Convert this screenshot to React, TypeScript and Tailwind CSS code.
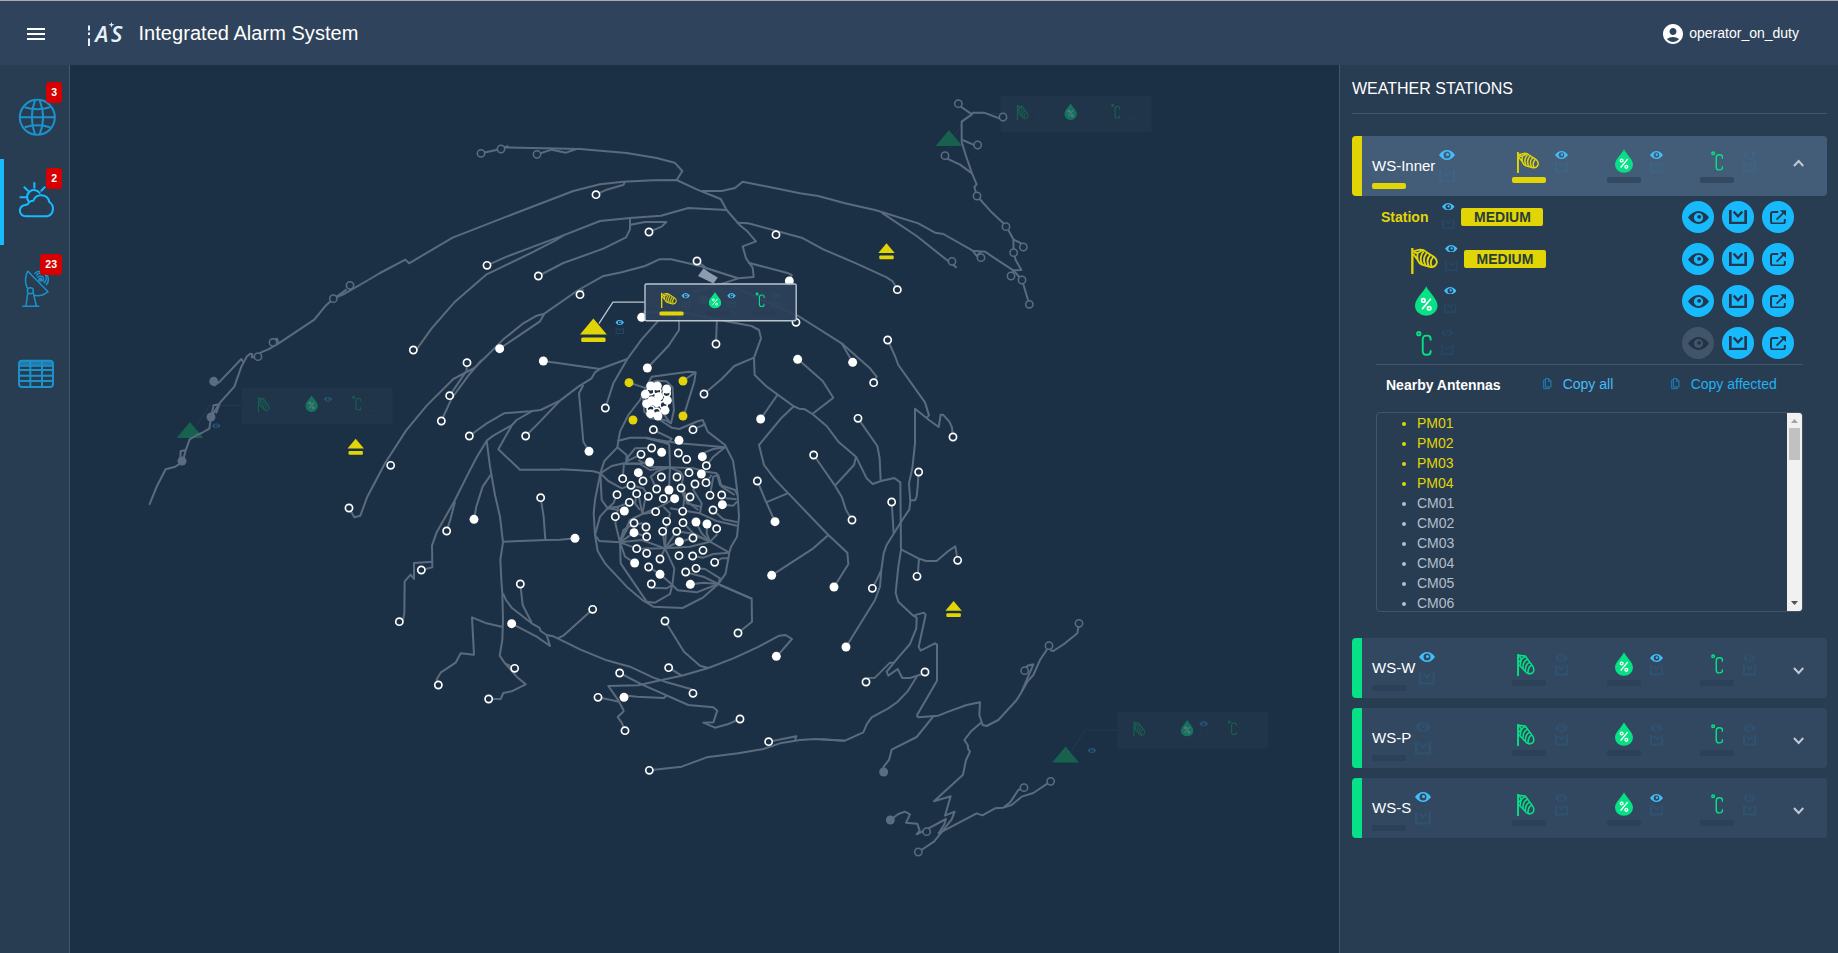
import React from "react";
import { MdMenu, MdAccountCircle } from "react-icons/md";

/* ---------- icons ---------- */

type Box = { x?: number; y?: number; width: number; height: number; className?: string };

const Eye = ({ className = "", ...p }: Box) => (
  <svg viewBox="0 0 64 40" preserveAspectRatio="none" className={className} {...p}>
    <path
      fill="currentColor"
      fillRule="evenodd"
      d="M0 20Q14 0 32 0T64 20Q50 40 32 40T0 20ZM32 6a14 14 0 1 0 0 28a14 14 0 1 0 0-28ZM34 12a6 6 0 1 1 0 12a6 6 0 1 1 0-12Z"
    />
  </svg>
);

const Ack = ({ className = "", ...p }: Box) => (
  <svg viewBox="0 0 54 44" preserveAspectRatio="none" fill="none" stroke="currentColor" className={className} {...p}>
    <path strokeWidth="8" d="M4 0V40H50V0" />
    <path strokeWidth="7" d="M14 5L27 19L40 5" />
  </svg>
);

const External = () => (
  <svg viewBox="0 0 50 44" width="16.5" height="14.5" fill="none" stroke="currentColor">
    <path strokeWidth="6" d="M25 6H9Q3 6 3 12V35Q3 41 9 41H39Q45 41 45 35V27" />
    <path strokeWidth="5.5" d="M20 29L42 7" />
    <path fill="currentColor" stroke="none" d="M30 1H49V19Z" />
  </svg>
);

const Windsock = ({ className = "", ...p }: Box) => (
  <svg viewBox="0 0 80 78" fill="none" stroke="currentColor" className={className} {...p}>
    <path strokeWidth="7" d="M3.5 0V78" />
    <path strokeWidth="5.5" strokeLinejoin="round" d="M6 10L26 5Q36 4 44 11L70 28Q80 37 76 47Q71 59 58 57L32 50Q24 47 19 35L6 18M8 14L20 15Q26 12 34 7M20 15Q17 26 20 35" />
    <path strokeWidth="5.5" d="M38 10Q22 28 33 49M47 15Q32 32 43 52M57 21Q43 36 53 55M66 27Q54 41 62 56" />
  </svg>
);

const WindsockCalm = ({ className = "", ...p }: Box) => (
  <svg viewBox="0 0 52 64" fill="none" stroke="currentColor" className={className} {...p}>
    <path strokeWidth="5.5" d="M2.8 0V64" />
    <path strokeWidth="4.4" strokeLinejoin="round" d="M4 4L24 6L46 36Q52 47 45 55Q36 61 27 54L6 32M5 24L13 15L6 6" />
    <path strokeWidth="4.4" d="M25 8Q10 10 9 34M31 15Q17 19 17 43M37 24Q24 28 24 50M43 32Q31 37 32 57" />
  </svg>
);

const Droplet = ({ className = "", ...p }: Box) => (
  <svg viewBox="0 0 54 71" className={className} {...p}>
    <path fill="currentColor" d="M27 0C33 14 54 30 54 46A27 25 0 0 1 0 46C0 30 21 14 27 0Z" />
    <g fill="none" stroke="#fff" strokeWidth="4">
      <path d="M38 30L17 55" />
      <circle cx="20" cy="34" r="4.2" />
      <circle cx="34" cy="53" r="4.2" />
    </g>
  </svg>
);

const Celsius = ({ className = "", ...p }: Box) => (
  <svg viewBox="0 0 38 60" fill="none" stroke="currentColor" className={className} {...p}>
    <circle cx="6.5" cy="6.5" r="4" strokeWidth="4.5" />
    <path strokeWidth="4.5" d="M35 23V19Q35 11 27 11H24Q16 11 16 20V48Q16 57 24 57H27Q35 57 35 49V46" />
  </svg>
);

const CopyIcon = () => (
  <svg viewBox="0 0 26 34" width="8.7" height="11.3" fill="none" stroke="#1d82b8" strokeWidth="3">
    <path d="M7 2H18L24 9V27H7ZM17 2V10H24M7 6H2V32H19V28" />
  </svg>
);

/* ---------- map ---------- */

type Sector = {
  x: number;
  y: number;
  paths: string[];
  open?: number[][];
  full?: number[][];
  farOpen?: number[][];
  farFull?: number[][];
  hot?: number[][];
};

const sectors: Sector[] = [
  {
    x: 140,
    y: 280,
    paths: [
      "28,675 51,618 77,568 106,560 120,551 122,513 137,511 130,538",
      "137,511 149,478 170,465 185,459 208,446 213,411 221,376 238,373 228,400",
      "213,411 240,368 283,320 304,260 320,230 330,221 337,223 335,232 354,230 363,217 385,208 416,190 523,119 557,77 580,56 610,43 685,0",
      "416,190 411,176 402,180",
      "590,50 607,38 620,28",
      "221,318 240,304 304,237 310,247",
      "627,684 643,712 661,707 682,650 735,550 798,452 860,377 940,297 1003,264 1040,228 1090,178 1150,130 1190,107 1213,101",
      "1079,206 1200,124 1213,101",
      "981,248 980,272 929,347",
      "904,423 935,355 985,287 1025,240",
      "988,468 1040,430 1092,400 1170,394 1202,390 1260,362",
      "1157,468 1200,425 1260,362",
      "1260,569 1140,569 1075,508 1116,435 1130,420 1175,394",
      "778,1025 789,1020 793,1000 794,904 812,884 822,897 822,849 877,845",
      "844,870 877,862 876,797 890,757 945,660 980,590 1010,532 1040,482 1060,467 1116,435",
      "920,753 932,715 945,665",
      "1040,482 1050,560 1065,645 1080,710 1089,787 1081,840 1084,900 1087,940 1089,1020 1087,1080 1079,1127 1095,1150 1130,1190 1157,1213 1115,1234 1090,1239 1082,1257 1046,1257",
      "1095,1150 1124,1165",
      "1002,718 1009,680 1028,620 1054,582",
      "1202,653 1211,710 1216,779",
      "1089,785 1216,780 1260,779 1305,775",
    ],
    open: [[820,210],[981,248],[929,347],[904,423],[988,468],[1157,468],[752,556],[627,684],[920,753],[1202,653],[844,870],[1141,912],[778,1025],[1124,1165],[895,1215],[1046,1257]],
    full: [[1079,206],[1210,243],[1002,718],[1115,1031]],
    farOpen: [[399,187],[354,230],[580,56],[630,16]],
    farFull: [[221,304],[213,411],[126,543]],
  },
  {
    x: 440,
    y: 130,
    paths: [
      "-215,450 -180,429 -104,389 -93,400 38,323 220,252 400,183 480,163 550,155 640,151 710,150 770,178 842,207 860,240 898,284 920,302 948,334 908,349 918,385 938,413 941,441 895,445",
      "123,70 183,57 205,48",
      "190,52 420,57 560,69 650,84 704,98 727,123 710,150",
      "291,73 335,59 378,68 410,57",
      "468,194 500,179 551,164 555,154",
      "785,183 845,183 885,174 908,155 1080,190 1135,198 1215,220 1305,240 1325,246",
      "141,406 200,380 280,350 370,316",
      "-80,660 -70,658 -25,595 45,515 140,433 275,368 345,332 370,316 480,273 570,264 663,257 745,234 860,240",
      "295,438 370,399 490,356 558,322 570,298 570,264",
      "572,284 615,276 679,276 665,290 627,306",
      "890,278 925,280 1085,323 1150,358 1255,403 1340,442 1358,454 1372,479",
      "420,494 430,478",
      "313,551 415,480 488,439 545,427 615,408 658,388 693,388 780,408 895,445 850,460 760,485",
      "771,393 800,415 895,445",
      "925,398 1045,430 1055,435 1050,454",
      "310,693 480,717 562,687 605,628 655,572",
      "360,812 415,770 455,745 465,727 480,717",
      "430,765 417,790 427,900 430,935 447,964",
      "496,834 520,760 562,687",
      "622,714 685,648 717,600 717,560",
      "828,642 831,560",
      "850,572 935,588 957,600 963,625 942,683 944,735 978,768 1012,793 1060,828 1077,836 1095,838 1117,852",
      "942,683 883,708 845,747 792,792",
      "880,470 980,515 1075,558 1205,640 1290,715 1310,740 1302,757",
      "1238,697 1205,640",
      "610,545 740,550 850,572",
    ],
    open: [[468,194],[627,306],[1008,314],[141,406],[295,438],[771,393],[420,494],[1372,479],[1068,577],[828,642],[1343,630],[1301,758],[496,834],[792,792]],
    full: [[1048,453],[605,562],[622,714],[1073,688],[1238,697],[447,964]],
    farOpen: [[123,70],[183,57],[291,73]],
    farFull: [[790,510]],
  },
  {
    x: 880,
    y: 80,
    paths: [
      "235,75 276,103 245,125 245,185 258,228 276,280 290,313 283,321 291,348 335,397 378,437 400,478 401,518 407,540 424,570 400,571 355,542 315,515 278,512 190,462 165,458 115,430 5,396",
      "276,101 280,98 312,98 360,116",
      "248,180 285,196",
      "195,233 240,254 276,280",
      "400,478 425,491",
      "5,398 110,468 228,562 214,548",
      "278,512 290,528 303,515",
      "400,571 426,600 448,673",
      "393,588 400,572",
    ],
    farOpen: [[235,71],[369,111],[293,195],[195,227],[291,348],[378,440],[430,501],[401,518],[303,533],[216,544],[393,588],[426,600],[448,673]],
  },
  {
    x: 720,
    y: 320,
    paths: [
      "503,60 525,108 535,135 615,247 627,286 620,293",
      "699,351 696,322 688,305 669,284 662,284 656,321 627,300 585,266 585,370 577,445 567,490 571,545 568,568 543,606 520,643 500,675 491,700 484,750 480,800 465,840 378,981",
      "457,805 475,770 483,752",
      "596,456 593,500 590,530 585,541 570,541",
      "515,546 521,640",
      "234,118 308,183 340,233 277,282",
      "277,282 320,318 355,365 408,410 440,475 458,492 483,483 523,474 541,487 543,690 535,740 527,818 535,845 580,887 590,893 589,925 570,972 535,1012 500,1055 505,1067 533,1047 547,1074 570,1074 615,1060",
      "438,1086 445,1074 465,1073 510,1028 522,1028",
      "580,887 611,878 617,884 596,980 602,992 645,970 651,974 651,1082 590,1187",
      "414,295 472,378 479,415 482,480",
      "281,405 345,497 365,530 378,570 396,600",
      "345,497 402,435 408,410",
      "122,297 172,225",
      "222,258 185,293 117,375 132,435 165,478 203,518 325,645 382,698 385,733 342,801",
      "112,483 138,545 165,605",
      "138,547 203,520",
      "155,766 280,685 325,645",
      "543,688 595,715 618,723 650,723 685,693 706,679 713,721",
      "597,715 593,769",
      "54,939 96,905 95,835 0,795",
    ],
    open: [[414,295],[281,405],[112,483],[596,456],[515,546],[396,600],[713,721],[591,769],[457,805],[699,351],[54,939],[438,1086],[615,1056]],
    full: [[122,297],[165,605],[155,766],[342,801],[378,981],[169,1009]],
  },
  {
    x: 820,
    y: 540,
    paths: [
      "290,410 262,455 232,486 205,505 155,532 140,553 130,577 75,602 0,598",
      "290,527 295,532 355,527 385,515 440,495 480,487 478,525 488,555 500,558 535,540 590,480 605,455 640,373 622,377 614,392",
      "605,455 622,425 640,405 660,360 678,333 687,317",
      "690,330 700,333 735,310 772,280 777,250",
      "340,529 290,591 215,629 207,660 191,680 191,695",
      "483,548 455,572 433,600 443,615 445,628 450,635 438,660 429,704 342,784 392,769 375,827 404,815 395,838 362,880 342,905 295,936",
      "211,840 235,822 255,815 270,823 258,848 292,851 299,872 290,883 320,868 378,837 372,855 356,880 470,820 487,826 525,805 550,803 575,795 605,770 640,759 692,724",
      "550,803 572,785 595,750 612,743",
    ],
    farOpen: [[777,250],[687,317],[614,392],[692,724],[612,743],[320,875],[295,936]],
    farFull: [[191,696],[211,840]],
  },
  {
    x: 380,
    y: 520,
    paths: [
      "368,321 320,310 276,292 282,404 242,400 227,428 183,457 170,478 175,495",
      "369,220 378,240 395,263 455,310 478,323 482,333 500,345 520,349 533,355 600,388 680,421 750,440 820,473 855,485 935,508 939,520",
      "421,192 428,255 455,308",
      "395,311 470,350 510,378 500,345",
      "638,268 550,347 533,355",
      "732,573 713,538 685,498 775,496 845,480 905,467 985,444 1060,415 1130,383 1198,347 1217,345 1236,357 1190,410",
      "732,573 713,591 725,608 735,632",
      "654,532 718,545",
      "732,526 770,530 852,534 860,525",
      "719,459 785,493 925,555 1000,562 1012,572 1000,607 970,608 1005,623 1045,612 1080,597",
      "866,443 905,467",
      "855,303 912,395 960,437 985,444",
      "1166,665 1249,649 1245,660",
      "808,751 905,740 980,712 1075,700 1150,687 1200,670 1260,660 1308,657 1395,662",
    ],
    open: [[638,268],[855,303],[866,443],[719,459],[654,532],[939,520],[735,632],[1080,597],[1166,665],[808,751]],
    full: [[732,532],[585,55]],
  },
  {
    x: 560,
    y: 360,
    paths: [
      "368,63 407,37 385,35 275,50 262,75 240,120 205,165 180,215 172,262 133,303 121,340 105,420 101,460 105,525 113,573 135,610 200,680 250,722 280,740 368,744 430,712 475,672 497,640 508,578 513,560 531,530 537,470 533,405 525,340 519,302 495,255 443,215 428,180 415,183 358,207 335,203 300,180",
      "407,37 403,65 372,165",
      "207,68 260,85",
      "270,70 290,62 320,64 338,82 340,130 342,150 333,190 315,180 270,175 253,155 247,100 270,70",
      "310,160 333,192",
      "399,209 437,192",
      "0,328 45,330 100,334 121,340",
      "121,340 155,318 192,310 240,312 270,330 328,322 400,325 440,335 470,340 480,375 525,390 533,405",
      "172,243 210,233 260,233 310,245 328,255 330,320",
      "328,245 335,236 280,210",
      "172,262 200,285 198,312 205,290 225,265 275,264",
      "198,305 243,283",
      "192,310 188,356",
      "197,312 240,310 269,306",
      "328,252 260,235 357,250 420,255 495,262",
      "495,262 460,290 439,317",
      "427,280 460,267 495,262",
      "328,322 290,335 272,350 290,387",
      "328,322 270,320 235,300",
      "328,322 360,335 370,350 363,384",
      "121,340 145,363 185,385 213,376",
      "121,340 125,420 143,445 160,430 171,404",
      "143,445 193,453",
      "143,445 175,440 208,427",
      "143,445 175,440 166,490 180,547",
      "105,525 120,470 143,445",
      "105,525 118,543 180,547 245,540 315,565 390,560 450,545",
      "180,547 190,510 222,489",
      "180,547 205,500 245,490 258,501",
      "180,547 222,518 260,530",
      "180,547 215,560 230,566",
      "180,547 182,610 260,725",
      "180,547 195,590 224,609",
      "180,547 210,480 247,462 300,440 344,416",
      "247,462 235,400 230,401",
      "247,462 255,420 265,409",
      "247,462 287,455",
      "240,450 225,430 230,401",
      "213,376 250,385 265,409",
      "325,484 330,460 310,440",
      "315,565 300,597",
      "315,565 308,514",
      "315,565 320,484",
      "315,565 350,514",
      "315,565 358,545",
      "315,565 345,550 399,534",
      "315,565 230,566",
      "315,565 343,625 337,675 330,702 285,728 260,725",
      "337,675 301,643 266,621",
      "337,675 320,685 274,683",
      "337,675 353,691 410,697 475,672",
      "475,672 430,668 391,673",
      "475,672 430,650 377,637",
      "408,625 435,627 480,655 475,672",
      "475,672 573,716",
      "450,545 508,578",
      "450,545 425,520 408,486",
      "450,545 440,520 441,492",
      "450,545 470,525 470,507",
      "450,545 400,520 369,488",
      "508,578 460,582 430,593 398,588",
      "508,595 485,595 464,607",
      "450,545 390,520 350,514",
      "531,497 470,483 420,460 330,445",
      "533,487 490,478 459,450",
      "420,460 425,430 400,390 405,372",
      "415,450 375,420 363,384",
      "368,454 375,400 363,384",
      "327,390 330,322",
      "420,440 380,430 390,411",
      "485,405 500,415 530,418",
      "487,434 520,437 531,425",
      "450,406 460,350 475,345 485,380 524,405",
      "438,368 455,345",
    ],
    open: [[280,209],[399,209],[275,264],[243,283],[355,279],[380,298],[439,317],[387,338],[188,356],[249,363],[304,351],[351,351],[213,376],[405,372],[438,368],[290,387],[363,384],[171,404],[230,401],[265,409],[310,416],[390,411],[450,406],[485,405],[208,427],[459,450],[287,455],[368,454],[166,470],[222,489],[320,484],[369,488],[258,501],[308,514],[350,514],[470,506],[260,530],[399,534],[230,566],[260,580],[300,597],[357,587],[398,588],[429,571],[464,607],[266,621],[408,625],[377,636],[274,672],[272,93],[292,93],[320,100],[311,135],[272,148],[290,155]],
    full: [[357,241],[305,277],[427,290],[269,306],[235,338],[424,342],[327,390],[344,416],[487,434],[193,453],[408,486],[441,492],[222,518],[358,545],[224,609],[300,643],[391,673],[272,78],[292,78],[320,87],[256,103],[296,110],[322,121],[260,131],[275,122],[290,128],[315,151],[272,161],[294,168]],
    hot: [[207,68],[369,63],[219,180],[369,168]],
  },
];

const SectorLines = ({ s }: { s: Sector }) => (
  <g transform={`translate(${s.x} ${s.y}) scale(0.33333)`}>
    {s.paths.map((p) => (
      <polyline key={p} points={p} />
    ))}
  </g>
);

const SectorNodes = ({ s }: { s: Sector }) => (
  <g transform={`translate(${s.x} ${s.y}) scale(0.33333)`}>
    {s.farOpen?.map(([x, y]) => <circle key={`${x}-${y}`} cx={x} cy={y} r="11" fill="#1c3045" stroke="#5a6c80" strokeWidth="4.6" />)}
    {s.farFull?.map(([x, y]) => <circle key={`${x}-${y}`} cx={x} cy={y} r="13.4" fill="#5a6c80" />)}
    {s.open?.map(([x, y]) => <circle key={`${x}-${y}`} cx={x} cy={y} r="10.8" fill="#1c3045" stroke="#fff" strokeWidth="5" />)}
    {s.full?.map(([x, y]) => <circle key={`${x}-${y}`} cx={x} cy={y} r="13.4" fill="#fff" />)}
    {s.hot?.map(([x, y]) => <circle key={`${x}-${y}`} cx={x} cy={y} r="13.4" fill="#e2d506" />)}
  </g>
);

const Eject = ({ x, y }: { x: number; y: number }) => (
  <g transform={`translate(${x} ${y})`} fill="#e2d506">
    <path d="M0 0L8.2 9.8H-8.2Z" />
    <rect x="-7.2" y="12.2" width="14.4" height="3.8" rx="1" />
  </g>
);

type StationProps = { x: number; y: number; active?: boolean; eye?: boolean; humidityEye?: boolean };

const MapStation = ({ x, y, active, eye, humidityEye }: StationProps) => (
  <g transform={`translate(${x} ${y})`}>
    <polyline
      points="5.5,5 19.5,-16.5 51.3,-16.5"
      fill="none"
      stroke={active ? "#b9c6cf" : "#24394f"}
      strokeWidth={active ? 1.3 : 1}
    />
    <path d="M0 0L13.4 16H-13.4Z" fill={active ? "#e2d506" : "#18614f"} />
    {active && <rect x="-12.2" y="19" width="24.4" height="4.4" rx="1.5" fill="#e2d506" />}
    {eye && <Eye x={22} y={1.3} width={8.6} height={5} className={active ? "text-[#49bff9]" : "text-[#255a7a]"} />}
    {active && <Ack x={22} y={9} width={8.6} height={6.5} className="text-[#234561]" />}
    <rect
      x="51.6"
      y="-34.6"
      width="151.2"
      height="36.8"
      rx="1.5"
      fill={active ? "#2d4159" : "#20344a"}
      fillOpacity={active ? 0.93 : 1}
      stroke={active ? "#b9c6cf" : "none"}
      strokeWidth="1.4"
    />
    {active ? (
      <>
        <Windsock x={67.5} y={-26} width={16} height={15.5} className="text-[#e2d506]" />
        <rect x="66" y="-7.2" width="24.2" height="4.2" rx="1.5" fill="#e2d506" />
        <rect x="112" y="-7.2" width="24.2" height="4.2" rx="1.5" fill="#2a3c53" />
        <rect x="157.5" y="-7.2" width="24.2" height="4.2" rx="1.5" fill="#2a3c53" />
        <Eye x={88} y={-25.5} width={8.6} height={5.4} className="text-[#49bff9]" />
        <Eye x={133.8} y={-25.5} width={8.6} height={5.4} className="text-[#49bff9]" />
        <Eye x={178.5} y={-25.5} width={8.6} height={5.4} className="text-[#2a4a66]" />
        <Ack x={88} y={-17.5} width={8.6} height={6.5} className="text-[#2a4a66]" />
        <Ack x={133.8} y={-17.5} width={8.6} height={6.5} className="text-[#2a4a66]" />
        <Ack x={178.5} y={-17.5} width={8.6} height={6.5} className="text-[#2a4a66]" />
      </>
    ) : (
      <>
        <WindsockCalm x={67.5} y={-25} width={12.5} height={15} className="text-[#18614f]" />
        {[88, 133.8, 178.5].map((ex, i) => (
          <React.Fragment key={ex}>
            <Eye x={ex} y={-25.5} width={8.6} height={5.4} className={i === 1 && humidityEye ? "text-[#255a7a]" : "text-[#21384f]"} />
            <Ack x={ex} y={-17.5} width={8.6} height={6.5} className="text-[#21384f]" />
          </React.Fragment>
        ))}
      </>
    )}
    <g opacity={active ? 1 : 0.36}>
      <Droplet x={115.3} y={-26.7} width={12.6} height={16.6} className="text-[#05e184]" />
    </g>
    <Celsius x={162} y={-26.3} width={9.5} height={15} className={active ? "text-[#05e184]" : "text-[#18614f]"} />
  </g>
);

const NetworkMap = () => (
  <svg viewBox="70 65 1269 888" width="1269" height="888" className="block">
    <MapStation x={190} y={422} eye humidityEye />
    <MapStation x={949} y={130} />
    <MapStation x={1065.6} y={746.6} eye humidityEye />
    <g fill="none" stroke="#5a6b7e" strokeWidth="6" strokeLinejoin="round">
      {sectors.map((s) => (
        <SectorLines key={`${s.x}-${s.y}`} s={s} />
      ))}
    </g>
    <path d="M703.5 268.3L709.3 272.5L717.8 277.6L713.5 283.5L698 276Z" fill="#8c9bb0" />
    {sectors.map((s) => (
      <SectorNodes key={`${s.x}-${s.y}`} s={s} />
    ))}
    <Eject x={886.5} y={243.2} />
    <Eject x={355.7} y={438.8} />
    <Eject x={953.6} y={601} />
    <MapStation x={593.4} y={318.6} active eye />
  </svg>
);

/* ---------- sidebar ---------- */

const GlobeArt = () => (
  <g strokeWidth="6.2">
    <circle cx="112" cy="133" r="52.5" />
    <path d="M60 133H164M74 103Q112 115 150 103M74 163Q112 151 150 163M105 82Q86 133 105 184M119 82Q140 133 119 184" />
  </g>
);
const WeatherArt = () => (
  <g strokeWidth="6.2" strokeLinecap="round">
    <path strokeLinejoin="round" d="M77 172A17 17 0 0 1 76 138L83 136A18 18 0 0 1 100 125A25 25 0 0 1 148 129A24 24 0 0 1 142 172Z" />
    <path d="M85 126A20 20 0 0 1 119 102M103 72V86M73 85L84 95M134 85L124 95M61 115H76" />
  </g>
);
const AntennaArt = () => (
  <g strokeWidth="4.5" strokeLinejoin="round">
    <path d="M83 78A62 62 0 0 0 82 130M101 151A50 50 0 0 0 144 140L83 78" />
    <circle cx="91" cy="137" r="9" />
    <path d="M83 145L78 183M100 144L109 183M67 184H118M103 86A24 24 0 1 1 138 121M109 93A16 16 0 1 1 131 114" />
    <path d="M113 99A9 9 0 1 1 127 109" />
    <circle cx="121" cy="104" r="4" fill="currentColor" />
  </g>
);
const TableArt = () => (
  <g strokeWidth="6">
    <rect x="57" y="89" width="102" height="79" rx="9" />
    <path fill="currentColor" fillOpacity="0.75" stroke="none" d="M57 96Q57 89 65 89H151Q159 89 159 96V105H57Z" />
    <path d="M57 117H159M57 134H159M57 150H159M91 89V168M126 89V168" />
    <path strokeWidth="4" d="M57 105H159" />
  </g>
);

const navItems = [
  { art: <GlobeArt />, badge: "3", active: false },
  { art: <WeatherArt />, badge: "2", active: true },
  { art: <AntennaArt />, badge: "23", active: false },
  { art: <TableArt />, badge: "", active: false },
];

const Sidebar = () => (
  <nav className="w-[70px] shrink-0 border-r border-[#42566b] bg-[#283c52] pt-2">
    {navItems.map((n, i) => (
      <div key={i} className="relative h-[86px]">
        {n.active && <div className="absolute inset-y-0 left-0 w-1 bg-[#18bafe]" />}
        <svg
          viewBox="0 0 207 258"
          width="69"
          height="86"
          fill="none"
          stroke="currentColor"
          className={n.active ? "block text-[#18bafe]" : "block text-[#1c92ca]"}
        >
          {n.art}
        </svg>
        {n.badge && (
          <span className="absolute top-[9px] right-[7px] flex h-[21px] items-center rounded-[3px] bg-[#d60000] px-[5px] text-[10.5px] font-bold text-white">
            {n.badge}
          </span>
        )}
      </div>
    ))}
  </nav>
);

/* ---------- header ---------- */

const Logo = () => (
  <svg width="38" height="34" viewBox="0 0 38 34" fill="#e6f3fb" className="ml-[39px] overflow-visible">
    <path d="M1 9.5H3V14.5H1ZM1 16.5H3V19H1ZM1 22.5H3V30H1Z" />
    <text x="8.2" y="26" className="font-['Open_Sans'] text-[22px] font-semibold italic">
      A
    </text>
    <text x="24" y="26" className="font-['Open_Sans'] text-[22px] font-semibold italic">
      S
    </text>
    <path d="M24.5 6L25.2 8.1L27.5 8.8L25.2 9.5L24.5 11.8L23.8 9.5L21.5 8.8L23.8 8.1Z" />
  </svg>
);

const Header = () => (
  <header className="flex h-[65px] shrink-0 items-center border-t border-[#a8acb0] bg-[#2f445c] pr-[39px] pl-6 text-white">
    <MdMenu size={24} className="mt-0.5" />
    <Logo />
    <h1 className="ml-[13.5px] text-xl tracking-[0.04px]">Integrated Alarm System</h1>
    <MdAccountCircle size={24} className="mt-0.5 ml-auto" />
    <span className="ml-1 text-sm">operator_on_duty</span>
  </header>
);

/* ---------- station panel ---------- */

const dim = "text-[#1fa4e4]/[0.11]";

const Status = ({ on }: { on: boolean }) => (
  <div className="flex w-[13px] flex-col gap-[3px]">
    <Eye width={13} height={8} className={on ? "text-[#41befa]" : dim} />
    <Ack width={13} height={10.5} className={dim} />
  </div>
);

type Station = { name: string; eye: boolean; wind: boolean; humidity: boolean; open?: boolean };

const SensorCell = ({ icon, alert, on, width }: { icon: React.ReactNode; alert?: boolean; on: boolean; width: string }) => (
  <div className={`flex items-start gap-[9px] ${width}`}>
    <div className="flex w-[34px] flex-col items-center">
      <div className="flex h-[27px] items-start justify-center">{icon}</div>
      <div className={`h-1.5 w-full rounded-[2px] ${alert ? "bg-[#e2d506]" : "bg-[#283c52]/60"}`} />
    </div>
    <div className="pt-px">
      <Status on={on} />
    </div>
  </div>
);

const StationCard = ({ s }: { s: Station }) => (
  <div
    className={`flex h-[60px] overflow-hidden rounded border-l-[10px] ${
      s.open ? "border-[#e2d506] bg-[#435c78]" : "border-[#05e184] bg-[#324861]"
    }`}
  >
    <div className="flex w-[150px] flex-col pl-2.5">
      <div className="flex h-[47px] items-start gap-1">
        <span className="mt-[21px] text-[15px] leading-[18px] text-white">{s.name}</span>
        <div className="mt-[14px] flex flex-col gap-[10px]">
          <Eye width={16} height={10} className={s.eye ? "text-[#41befa]" : dim} />
          <Ack width={16} height={12.5} className={dim} />
        </div>
      </div>
      <div className={`h-1.5 w-[34px] rounded-[2px] ${s.open ? "bg-[#e2d506]" : "bg-[#283c52]/60"}`} />
    </div>
    <div className={`flex ${s.open ? "pt-[14px]" : "pt-[15px]"}`}>
      <SensorCell
        width="w-[95px]"
        alert={s.open}
        on={s.wind}
        icon={
          s.open ? (
            <Windsock width={22} height={21.5} className="mt-[1.5px] mr-0.5 text-[#e2d506]" />
          ) : (
            <WindsockCalm width={18} height={22} className="mt-px mr-1.5 text-[#05e184]" />
          )
        }
      />
      <SensorCell width="w-[93px]" on={s.humidity} icon={<Droplet width={18} height={24} className="-mt-px text-[#05e184]" />} />
      <SensorCell width="w-[70px]" on={false} icon={<Celsius width={12.5} height={20} className="mt-px text-[#05e184]" />} />
    </div>
    <svg
      viewBox="0 0 34 24"
      width="11.3"
      height="8"
      fill="none"
      stroke="#c3c9d4"
      strokeWidth="6"
      className={`ml-[23px] ${s.open ? "mt-[23px]" : "mt-[29px]"}`}
    >
      <path d={s.open ? "M3 21L17 6L31 21" : "M3 3L17 18L31 3"} />
    </svg>
  </div>
);

const RoundButton = ({ off, children }: { off?: boolean; children: React.ReactNode }) => (
  <button
    className={`flex size-8 items-center justify-center rounded-full ${
      off ? "bg-[#415469] text-[#223346]" : "bg-[#18bafe] text-[#22384e]"
    }`}
  >
    {children}
  </button>
);

const DetailRow = ({ pad, label, on, severity, gap }: { pad: string; label: React.ReactNode; on: boolean; severity?: boolean; gap: string }) => (
  <div className={`flex h-[42px] items-center pr-[33px] ${pad}`}>
    {label}
    <div className={`mb-0.5 flex w-[13px] flex-col gap-[9px] ${gap}`}>
      <Eye width={12.5} height={7.5} className={on ? "text-[#41befa]" : dim} />
      <Ack width={12.5} height={10} className={dim} />
    </div>
    {severity && (
      <span className="ml-[6px] flex h-[18px] w-[82px] items-center justify-center rounded-[2px] bg-[#e2d506] text-sm font-bold text-[#283c3c]">
        MEDIUM
      </span>
    )}
    <div className="ml-auto flex gap-2">
      <RoundButton off={!on}>
        <Eye width={21} height={13} />
      </RoundButton>
      <RoundButton>
        <Ack width={18} height={14.5} />
      </RoundButton>
      <RoundButton>
        <External />
      </RoundButton>
    </div>
  </div>
);

const antennas = ["PM01", "PM02", "PM03", "PM04", "CM01", "CM02", "CM03", "CM04", "CM05", "CM06"];

const AntennaList = () => (
  <div className="ml-6 flex h-[200px] w-[427px] overflow-hidden rounded border border-[#42546a]">
    <ul className="flex-1 list-disc pl-10 text-sm leading-5">
      {antennas.map((a, i) => (
        <li key={a} className={i < 4 ? "text-[#e2d506]" : "text-[#b4bfca]"}>
          {a}
        </li>
      ))}
    </ul>
    <div className="flex w-[15px] flex-col items-center bg-[#f1f1f1]">
      <svg width="15" height="15">
        <path d="M4 10L7.5 6L11 10Z" fill="#a3a3a3" />
      </svg>
      <div className="h-8 w-[11px] bg-[#c1c1c1]" />
      <svg width="15" height="15" className="mt-auto">
        <path d="M4 5L7.5 9L11 5Z" fill="#505050" />
      </svg>
    </div>
  </div>
);

const Panel = () => (
  <aside className="w-[499px] shrink-0 border-l border-[#42566b] bg-[#283c52] pr-[11px] pl-3">
    <h2 className="flex h-[49px] items-center border-b border-[#42566b] text-base text-white">WEATHER STATIONS</h2>
    <div className="mt-[22px]">
      <StationCard s={{ name: "WS-Inner", eye: true, wind: true, humidity: true, open: true }} />
      <DetailRow pad="pl-[29px]" on severity gap="ml-[14px]" label={<span className="text-sm font-bold text-[#e2d506]">Station</span>} />
      <DetailRow pad="pl-[59px]" on severity gap="ml-[7px]" label={<Windsock width={27} height={26} className="mt-1 text-[#e2d506]" />} />
      <DetailRow pad="pl-[63px]" on gap="ml-[6px]" label={<Droplet width={22.5} height={30} className="text-[#05e184]" />} />
      <DetailRow pad="pl-[64px]" on={false} gap="ml-[9px]" label={<Celsius width={16} height={25} className="text-[#05e184]" />} />
      <div className="ml-6 flex h-12 w-[427px] border-t border-[#42566b] pl-2.5 text-sm text-[#22b1f2]">
        <span className="mt-[10px] w-[157px] font-bold text-white">Nearby Antennas</span>
        <span className="mt-[9px] flex h-5 w-[128px] items-center text-[#45bdf5]">
          <CopyIcon />
          <span className="ml-[11px]">Copy all</span>
        </span>
        <span className="mt-[9px] flex h-5 items-center">
          <CopyIcon />
          <span className="ml-[11px]">Copy affected</span>
        </span>
      </div>
      <AntennaList />
    </div>
    <div className="mt-[26px] flex flex-col gap-2.5">
      <StationCard s={{ name: "WS-W", eye: true, wind: false, humidity: true }} />
      <StationCard s={{ name: "WS-P", eye: false, wind: false, humidity: false }} />
      <StationCard s={{ name: "WS-S", eye: true, wind: false, humidity: true }} />
    </div>
  </aside>
);

export default function App() {
  return (
    <div className="flex h-[953px] w-[1838px] flex-col overflow-hidden bg-[#1c3045] font-['Liberation_Sans',sans-serif]">
      <Header />
      <div className="flex min-h-0 flex-1">
        <Sidebar />
        <main className="min-w-0 flex-1">
          <NetworkMap />
        </main>
        <Panel />
      </div>
    </div>
  );
}
